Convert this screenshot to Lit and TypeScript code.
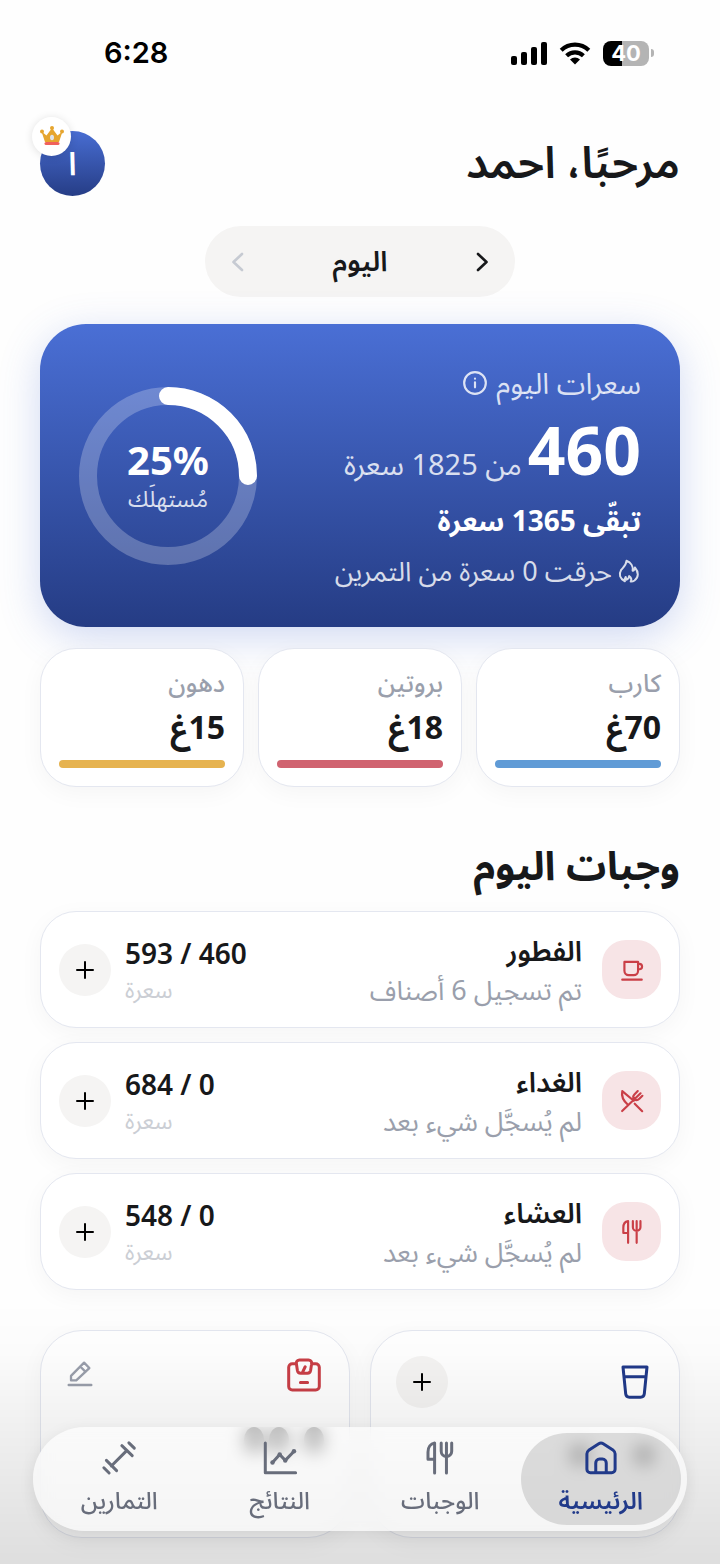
import { LitElement, html, css, svg } from "lit";
import { customElement, property } from "lit/decorators.js";

const paths: Record<string, unknown> = {
  cup: svg`<path d="M5 4.5h12.6v8.3a4 4 0 0 1-4 4H9a4 4 0 0 1-4-4zM17.6 6.3h1.2a2.5 2.5 0 0 1 0 5h-1.2M3 20.9h18"/>`,
  crossed: svg`<path d="M3 2.9l10.6 8.9M3 2.9c-.9 4.3.8 8.600 5 12.300M2.900 21.300L19.900 4.900M14.500 14.500l6.900 6.900M17.300 2.800l-2.900 2.900c-1.700 1.700-1.400 3.400-.3 4.500s3 1.400 4.700-.3l2.800-2.700"/>`,
  cutlery: svg`<path d="M8.400 22V2C5.800 2.400 4 4.800 4 8v4.900h4.400M16.300 22V2M12.800 2v5.500a3.500 3.500 0 0 0 7 0V2"/>`,
  home: svg`<path d="M2.600 9.200c0-.9.4-1.700 1.200-2.300l6.700-4.400c.9-.6 2.100-.6 3 0l6.700 4.400c.8.6 1.200 1.400 1.200 2.300v10.300c0 1.300-1 2.300-2.300 2.300H4.900c-1.300 0-2.300-1-2.300-2.300zM8.500 21.800v-6.500c0-1.500 1-2.600 2.500-2.600h2c1.500 0 2.500 1.100 2.500 2.600v6.500"/>`,
  chart: svg`<path d="M2.200 2v19.800h20.200M7 15l4.800-5.300 3.700 3.900 5.900-6.100"/><g fill="currentColor" stroke="none"><circle cx="7" cy="15" r="1.500"/><circle cx="11.800" cy="9.600" r="1.500"/><circle cx="15.500" cy="13.600" r="1.500"/><circle cx="21.300" cy="7.500" r="1.500"/></g>`,
  dumbbell: svg`<path d="M6.900 17.300L17.300 6.900M3.600 13.600l6.800 6.800M13.900 3.800l6.900 6.600M1.900 18.500l3.500 3.500M18.600 1.900l3.600 3.500"/>`,
  scale: svg`<path d="M7 4.500H4.200a2.400 2.400 0 0 0-2.400 2.400v12.700A2.400 2.400 0 0 0 4.200 22h15.600a2.400 2.400 0 0 0 2.400-2.400V6.900a2.400 2.400 0 0 0-2.400-2.400H17M9 2h6a2.100 2.100 0 0 1 2.100 2.400l-.7 4.600a2.200 2.200 0 0 1-2.200 1.800H9.800A2.200 2.200 0 0 1 7.600 9l-.7-4.600A2.100 2.100 0 0 1 9 2zM11 10.200l1.800-3.700M9.600 17h4.800"/>`,
  water: svg`<path d="M4 2h16l-1.800 17.900a2.500 2.500 0 0 1-2.500 2.200H8.300a2.500 2.500 0 0 1-2.500-2.200zM4.800 8.500h14.400"/>`,
  pencil: svg`<path d="M2.300 21.400h19.400M4.300 17.400v-3.800L15.500 2.300l4.500 4.600L8.800 17.400zM12.200 5.600l4.600 4.600"/>`,
  info: svg`<circle cx="12" cy="12" r="10"/><path d="M12 11.300v4.700M12 8h.01"/>`,
  flame: svg`<path d="M9.500 1.800c4.400 1.700 6.900 5.600 6.100 10 1.300-.3 2-1.300 2.300-3.300 4 4.700 3.900 9.700-.4 13-1 .7-2.500 1.200-3.800 1.100.9-1.500.8-3.700-1.600-5.500-.1 1.800-.8 2.800-2.400 3.600-.6-1-.9-1.800-1-2.800-1 1.300-1.300 2.700-.8 4.400C2.800 19.700 1.500 15.300 4.100 10.900 6.300 8.300 9.300 6.300 9.500 1.800z"/>`,
  plus: svg`<path d="M12 4v16M4 12h16"/>`,
  next: svg`<path d="M8 4l8.500 8L8 20"/>`,
  prev: svg`<path d="M16 4l-8.500 8L16 20"/>`,
};

@customElement("ui-icon")
class UiIcon extends LitElement {
  @property() name = "plus";
  static styles = css`
    :host { display: block; flex: none; width: 26px; height: 26px; }
    svg { display: block; width: 100%; height: 100%; overflow: visible; fill: none; stroke: currentColor;
      stroke-width: var(--stroke, 2); stroke-linecap: round; stroke-linejoin: round; }
  `;
  render() {
    return html`<svg viewBox="0 0 24 24" aria-hidden="true">${paths[this.name]}</svg>`;
  }
}

const macros = [
  { label: "كارب", value: "70غ", tone: "blue" },
  { label: "بروتين", value: "18غ", tone: "red" },
  { label: "دهون", value: "15غ", tone: "amber" },
];
const meals = [
  { name: "الفطور", note: "تم تسجيل 6 أصناف", goal: "593 / 460", icon: "cup" },
  { name: "الغداء", note: "لم يُسجَّل شيء بعد", goal: "684 / 0", icon: "crossed" },
  { name: "العشاء", note: "لم يُسجَّل شيء بعد", goal: "548 / 0", icon: "cutlery" },
];
const tabs = [
  { label: "الرئيسية", icon: "home", active: true },
  { label: "الوجبات", icon: "cutlery", active: false },
  { label: "النتائج", icon: "chart", active: false },
  { label: "التمارين", icon: "dumbbell", active: false },
];

@customElement("app-root")
class AppRoot extends LitElement {
  static styles = css`
    :host { display: block; min-height: 100vh; background: #fefefe; color: #17181a;
      font-family: "Noto Sans", "Noto Sans Arabic", sans-serif; }
    * { box-sizing: border-box; margin: 0; }
    button { border: 0; padding: 0; background: none; font: inherit; color: inherit; cursor: pointer; }
    .page { padding: 36px 40px 26px; }
    .status { display: flex; justify-content: space-between; align-items: center; height: 34px;
      padding: 0 26px 0 64px; font-family: Inter, sans-serif; color: #000; }
    .time { font-size: 29px; line-height: 34px; font-weight: 600; }
    .signals { display: flex; align-items: center; gap: 12px; }
    .signals svg { display: block; }
    .battery { display: flex; align-items: center; gap: 2px; }
    .cell { width: 46px; height: 25px; border-radius: 8px; text-align: center; color: #fff;
      background: linear-gradient(90deg, #000 41%, #b4b4b4 41%); font-size: 22px; line-height: 25px; font-weight: 700; }
    .knob { width: 3px; height: 8px; border-radius: 0 3px 3px 0; background: #b4b4b4; }
    .greeting { display: flex; justify-content: space-between; align-items: center; height: 66px; margin-top: 60px; }
    h1 { padding-bottom: 4px; font-size: 44px; line-height: 60px; font-weight: 600; }
    .avatar { position: relative; width: 65px; height: 65px; border-radius: 50%; color: #fff;
      background: linear-gradient(#486dd2, #263d86); font-size: 32px; line-height: 60px; font-weight: 600; }
    .badge { position: absolute; left: -8px; top: -14px; display: grid; place-items: center; width: 39px; height: 39px;
      border-radius: 50%; background: #fff; box-shadow: 0 1px 8px rgba(0,0,0,.12); }
    .day { display: flex; justify-content: space-between; align-items: center; width: 310px; height: 71px;
      margin: 30px auto 27px; padding: 0 21px; border-radius: 36px; background: #f5f4f3; }
    .day ui-icon { width: 24px; height: 24px; --stroke: 2.6; }
    .day strong { padding-bottom: 4px; font-size: 28px; line-height: 40px; font-weight: 600; }
    .muted { color: #c6cad2; }
    .hero { display: flex; justify-content: space-between; align-items: center; height: 303px; padding: 0 39px;
      border-radius: 46px; color: #fff; background: linear-gradient(#4a6fd5, #253c84);
      box-shadow: 0 10px 40px rgba(72,109,210,.26); }
    .summary { display: flex; flex-direction: column; padding-top: 8px; }
    .soft { color: rgba(255,255,255,.82); }
    .line { display: flex; align-items: center; gap: 8px; font-size: 29px; line-height: 40px; }
    .total { display: flex; align-items: baseline; gap: 6px; font-size: 29px; line-height: 40px; }
    .total strong { font-size: 66px; line-height: 92px; font-weight: 700; }
    .left { font-size: 28px; line-height: 50px; font-weight: 700; }
    .burned { gap: 5px; font-size: 27px; line-height: 52px; }
    .burned ui-icon { width: 24px; height: 24px; }
    .ring { display: grid; place-items: center; width: 178px; height: 178px; }
    .ring > * { grid-area: 1 / 1; }
    .ring circle { fill: none; stroke: rgba(255,255,255,.24); stroke-width: 18; }
    .ring .arc { stroke: #fff; stroke-linecap: round; }
    .percent { text-align: center; font-size: 23px; line-height: 32px; }
    .percent strong { display: block; font-size: 40px; line-height: 44px; }
    .macros { display: grid; grid-template-columns: repeat(3, 1fr); gap: 14px; margin-top: 21px; }
    .card { border: 1px solid #e4e7f0; border-radius: 36px; background: #fff; box-shadow: 0 6px 24px rgba(0,0,0,.04); }
    .macro { height: 139px; padding: 16px 18px 18px; display: flex; flex-direction: column; }
    .macro span { font-size: 25px; line-height: 34px; font-weight: 500; color: #9a9fac; }
    .macro strong { font-size: 32px; line-height: 56px; font-weight: 700; }
    .bar { height: 8px; margin-top: auto; border-radius: 4px; }
    .blue { background: #609bd6; } .red { background: #d06370; } .amber { background: #e6b350; }
    h2 { margin: 48px 0 16px; font-size: 40px; line-height: 60px; font-weight: 700; }
    .meals { display: grid; gap: 14px; }
    .meal { display: flex; align-items: center; height: 117px; padding: 0 18px; }
    .tile { display: grid; place-items: center; width: 59px; height: 59px; border-radius: 24px; background: #f7e4e6; color: #ca3f47; }
    .name { flex: 1; padding-right: 20px; }
    h3 { font-size: 28px; line-height: 40px; font-weight: 600; }
    .name p { font-size: 27px; line-height: 40px; color: #9a9fac; }
    .goal { margin-left: 14px; text-align: left; }
    .goal strong { display: block; font-size: 28px; line-height: 38px; font-weight: 600; direction: ltr; }
    .goal span { display: block; font-size: 23px; line-height: 34px; color: #cbced4; }
    .add { display: grid; place-items: center; width: 52px; height: 52px; border-radius: 50%; background: #f5f4f3; color: #000; }
    .add ui-icon { width: 24px; height: 24px; }
    .widgets { display: grid; grid-template-columns: 1fr 1fr; gap: 20px; margin-top: 40px; }
    .widget { height: 208px; padding: 25px; border-radius: 42px; }
    .head { display: flex; justify-content: space-between; }
    .head > ui-icon { width: 36px; height: 36px; }
    .water { color: #213a8a; margin: 8px 1px 0; }
    .scale { margin: 1px 2px 0; color: #ca3f47; }
    .head .pencil { width: 28px; height: 28px; margin-top: 4px; color: #9a9fac; --stroke: 2; }
    .reading { display: flex; }
    .reading i { width: 20px; height: 20px; border-radius: 50%; background: #333; }
    .weight { margin-top: 34px; gap: 5px; }
    .weight i { height: 26px; }
    .weight i:first-child { margin-left: 10px; }
    .litres { margin-top: 37px; gap: 44px; }
    .shade { position: fixed; inset: auto 0 0; height: 264px; pointer-events: none;
      background: linear-gradient(rgba(0,0,0,0), rgba(0,0,0,.012) 20%, rgba(0,0,0,.055) 48%, rgba(0,0,0,.125)); }
    nav { position: fixed; left: 33px; right: 33px; bottom: 33px; display: grid; grid-template-columns: repeat(4, 1fr);
      padding: 6px; border-radius: 52px; background: rgba(255,255,255,.64); backdrop-filter: blur(9px);
      box-shadow: 0 4px 16px rgba(0,0,0,.08); }
    nav a { display: flex; flex-direction: column; align-items: center; height: 92px; padding-top: 7px; border-radius: 46px;
      color: #686d7b; font-size: 24px; line-height: 38px; font-weight: 500; text-decoration: none; gap: 5px; }
    nav ui-icon { width: 36px; height: 36px; }
    nav .on { background: rgba(0,0,0,.12); color: #213a8a; font-weight: 600; }
  `;

  render() {
    return html`
      <div class="page" dir="rtl">
        <header>
          <div class="status" dir="ltr">
            <span class="time">6:28</span>
            <div class="signals">
              <svg width="36" height="23" viewBox="0 0 36 23" aria-hidden="true">
                <rect x="0" y="14" width="6" height="9" rx="2"/><rect x="10" y="10" width="6" height="13" rx="2"/>
                <rect x="20" y="5" width="6" height="18" rx="2"/><rect x="30" y="0" width="6" height="23" rx="2"/>
              </svg>
              <svg width="32" height="23" viewBox="0 0 32 23" aria-hidden="true">
                <path d="M2.200 8.200a20 20 0 0 1 27.600 0M7.600 13.700a12.300 12.300 0 0 1 16.800 0" fill="none" stroke="#000" stroke-width="4.200"/>
                <path d="M16 22.500l-5-5a7.300 7.300 0 0 1 10 0z"/>
              </svg>
              <div class="battery"><div class="cell">40</div><div class="knob"></div></div>
            </div>
          </div>
          <div class="greeting">
            <h1>مرحبًا، احمد</h1>
            <button class="avatar">ا
              <span class="badge">
                <svg width="24" height="20" viewBox="0 0 24 20" aria-hidden="true">
                  <path d="M1.500 5.500l5 4L12 2l5.500 7.500 5-4L19 16H5z" fill="#e6a52f"/>
                  <g fill="#e6a52f"><circle cx="2" cy="5.500" r="2"/><circle cx="12" cy="2" r="2"/><circle cx="22" cy="5.500" r="2"/></g>
                  <ellipse cx="12" cy="11.500" rx="2" ry="2.800" fill="#dfe3ea"/><rect x="4.500" y="16" width="15" height="3" rx="1.500" fill="#f0615c"/>
                </svg>
              </span>
            </button>
          </div>
        </header>
        <div class="day">
          <button aria-label="اليوم السابق"><ui-icon name="next"></ui-icon></button>
          <strong>اليوم</strong>
          <button class="muted" aria-label="اليوم التالي"><ui-icon name="prev"></ui-icon></button>
        </div>
        <section class="hero">
          <div class="summary">
            <p class="line soft">سعرات اليوم <ui-icon name="info"></ui-icon></p>
            <p class="total"><strong>460</strong><span class="soft">من 1825 سعرة</span></p>
            <p class="left">تبقّى 1365 سعرة</p>
            <p class="line burned soft"><ui-icon name="flame"></ui-icon>حرقت 0 سعرة من التمرين</p>
          </div>
          <div class="ring">
            <svg width="178" height="178" viewBox="0 0 178 178" aria-hidden="true">
              <circle cx="89" cy="89" r="80"/>
              <path class="arc" d="M89 9a80 80 0 0 1 80 80" fill="none" stroke-width="18"/>
            </svg>
            <p class="percent"><strong dir="ltr">25%</strong><span class="soft">مُستهلَك</span></p>
          </div>
        </section>
        <section class="macros">
          ${macros.map((m) => html`<div class="card macro"><span>${m.label}</span><strong>${m.value}</strong><div class="bar ${m.tone}"></div></div>`)}
        </section>
        <h2>وجبات اليوم</h2>
        <section class="meals">
          ${meals.map((m) => html`
            <article class="card meal">
              <div class="tile"><ui-icon name=${m.icon}></ui-icon></div>
              <div class="name"><h3>${m.name}</h3><p>${m.note}</p></div>
              <div class="goal"><strong>${m.goal}</strong><span>سعرة</span></div>
              <button class="add" aria-label="إضافة"><ui-icon name="plus"></ui-icon></button>
            </article>`)}
        </section>
        <section class="widgets">
          <div class="card widget">
            <div class="head"><ui-icon class="water" name="water"></ui-icon>
              <button class="add" aria-label="إضافة"><ui-icon name="plus"></ui-icon></button></div>
            <div class="reading litres"><i></i><i></i></div>
          </div>
          <div class="card widget">
            <div class="head"><ui-icon class="scale" name="scale"></ui-icon><ui-icon class="pencil" name="pencil"></ui-icon></div>
            <div class="reading weight"><i></i><i></i><i></i></div>
          </div>
        </section>
        <div class="shade"></div>
        <nav>
          ${tabs.map((t) => html`<a href="#" class=${t.active ? "on" : ""}><ui-icon name=${t.icon}></ui-icon><span>${t.label}</span></a>`)}
        </nav>
      </div>`;
  }
}
